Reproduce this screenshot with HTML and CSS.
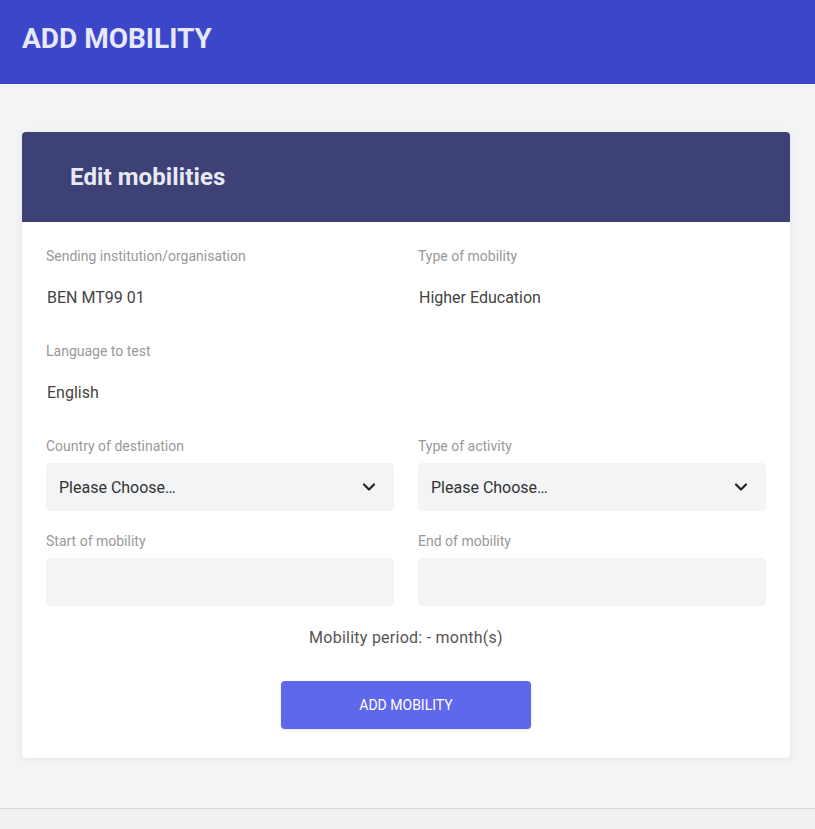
FILE: index.html
```html
<!DOCTYPE html>
<html lang="en">
<head>
<meta charset="utf-8">
<title>Add mobility</title>
<link rel="stylesheet" href="styles.css">
</head>
<body>
<header class="topbar">
  <h1 class="topbar-title">ADD MOBILITY</h1>
</header>
<main class="content">
  <section class="card">
    <div class="card-head">
      <h2 class="card-title">Edit mobilities</h2>
    </div>
    <div class="card-body">
      <div class="grid">
        <div class="field">
          <div class="label">Sending institution/organisation</div>
          <div class="value">BEN MT99 01</div>
        </div>
        <div class="field">
          <div class="label">Type of mobility</div>
          <div class="value">Higher Education</div>
        </div>
        <div class="field">
          <div class="label">Language to test</div>
          <div class="value">English</div>
        </div>
        <div class="field"></div>
        <div class="field">
          <div class="label">Country of destination</div>
          <div class="select">
            <span>Please Choose…</span>
            <svg class="chev" width="14" height="10" viewBox="0 0 14 10"><path d="M2 2.5 L7 7.5 L12 2.5" fill="none" stroke="#222" stroke-width="2.2" stroke-linecap="round" stroke-linejoin="round"/></svg>
          </div>
        </div>
        <div class="field">
          <div class="label">Type of activity</div>
          <div class="select">
            <span>Please Choose…</span>
            <svg class="chev" width="14" height="10" viewBox="0 0 14 10"><path d="M2 2.5 L7 7.5 L12 2.5" fill="none" stroke="#222" stroke-width="2.2" stroke-linecap="round" stroke-linejoin="round"/></svg>
          </div>
        </div>
        <div class="field">
          <div class="label">Start of mobility</div>
          <div class="input"></div>
        </div>
        <div class="field">
          <div class="label">End of mobility</div>
          <div class="input"></div>
        </div>
      </div>
      <p class="period">Mobility period: - month(s)</p>
      <div class="actions">
        <button class="btn" type="button">ADD MOBILITY</button>
      </div>
    </div>
  </section>
</main>
<footer class="footer"></footer>
</body>
</html>
```
FILE: styles.css
```css
* { box-sizing: border-box; }
html, body { margin: 0; padding: 0; }
body {
  font-family: Roboto, "Liberation Sans", sans-serif;
  background: #f3f4f6;
  color: #444;
}
.topbar {
  background: #3c46c9;
  height: 84px;
  display: flex;
  align-items: center;
  padding: 0 22px;
}
.topbar-title {
  margin: 0;
  font-size: 28px;
  font-weight: 700;
  color: #e6e8fb;
  line-height: 1;
  margin-top: -6px;
}
.content {
  padding: 48px 25px 50px 22px;
}
.card {
  background: #fff;
  border-radius: 4px;
  box-shadow: 0 1px 8px rgba(0,0,0,0.07);
  overflow: hidden;
}
.card-head {
  background: #3e4175;
  height: 90px;
  display: flex;
  align-items: center;
  padding: 0 48px;
}
.card-title {
  margin: 0;
  font-size: 24px;
  font-weight: 700;
  color: #e8e9f6;
  line-height: 1;
  letter-spacing: 0.1px;
}
.card-body {
  padding: 24px 24px 29px;
}
.grid {
  display: grid;
  grid-template-columns: 1fr 1fr;
  column-gap: 24px;
  row-gap: 20px;
}
.label {
  font-size: 14px;
  line-height: 20px;
  color: #999;
  margin-bottom: 7px;
}
.value {
  height: 48px;
  display: flex;
  align-items: center;
  font-size: 16px;
  color: #444;
  padding-left: 1px;
}
.select, .input {
  height: 48px;
  background: #f3f4f6;
  border-radius: 4px;
}
.select {
  display: flex;
  align-items: center;
  justify-content: space-between;
  padding: 0 18px 0 13px;
  font-size: 16px;
  color: #333;
}
.period {
  margin: 20px 0 0;
  text-align: center;
  font-size: 16px;
  line-height: 24px;
  color: #555;
  letter-spacing: 0.25px;
}
.actions {
  display: flex;
  justify-content: center;
  margin-top: 31px;
}
.btn {
  width: 250px;
  height: 48px;
  border: none;
  border-radius: 4px;
  background: #5f67ec;
  color: #fff;
  font-family: Roboto, "Liberation Sans", sans-serif;
  font-size: 14px;
  font-weight: 400;
  box-shadow: 0 1px 3px rgba(0,0,0,0.1);
}
.footer {
  border-top: 1px solid #d9d9d9;
  background: #f1f1f1;
  height: 40px;
}
```
